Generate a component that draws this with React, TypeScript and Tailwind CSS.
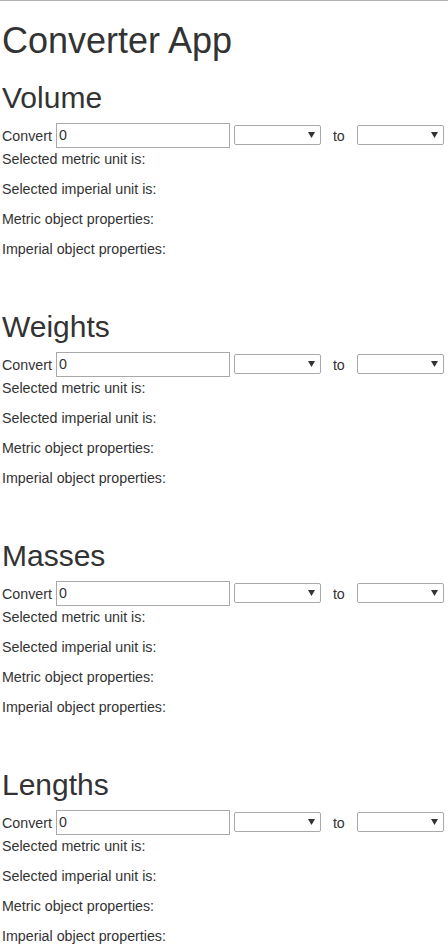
import React from "react";

function Select() {
  return (
    <div className="relative w-[87px] h-[20px]">
      <select className="appearance-none w-full h-full border border-[#a9a9a9] rounded-[2px] bg-white text-[13px] px-[4px]"></select>
      <svg className="absolute left-[74px] top-[7px] pointer-events-none" width="7" height="6" viewBox="0 0 7 6">
        <path d="M0 0 L7 0 L3.5 6 Z" fill="#333" />
      </svg>
    </div>
  );
}

function Section({ title }: { title: string }) {
  return (
    <div>
      <h2 className="mt-[20px] mb-[9px] text-[30px] leading-[1.1] font-normal">{title}</h2>
      <div className="flex items-center h-[25px] mb-[1px]">
        <span className="leading-[20px] mt-[2px] text-[14.25px]">Convert</span>
        <input
          type="text"
          defaultValue="0"
          className="ml-[4px] w-[174px] h-[25px] border border-[#a9a9a9] px-[2px] text-[14.25px] bg-white outline-none"
        />
        <div className="ml-[4px]">
          <Select />
        </div>
        <span className="mx-[12px] leading-[20px] mt-[2px] text-[14.25px]">to</span>
        <Select />
      </div>
      <p className="leading-[20px] mb-[10px] text-[14.25px]">Selected metric unit is:</p>
      <p className="leading-[20px] mb-[10px] text-[14.25px]">Selected imperial unit is:</p>
      <p className="leading-[20px] mb-[10px] text-[14.25px]">Metric object properties:</p>
      <p className="leading-[20px] mb-[10px] text-[14.25px]">Imperial object properties:</p>
      <div className="h-[21px]"></div>
    </div>
  );
}

export default function App() {
  return (
    <div
      className="min-h-[945px] bg-white text-[#333] text-[14px] border-t border-[#b3b3b3] pl-[2px] flow-root"
      style={{ fontFamily: '"Liberation Sans", Arial, Helvetica, sans-serif' }}
    >
      <h1 className="mt-[20px] mb-[10px] text-[36px] leading-[1.1] font-normal">Converter App</h1>
      <Section title="Volume" />
      <Section title="Weights" />
      <Section title="Masses" />
      <Section title="Lengths" />
    </div>
  );
}
